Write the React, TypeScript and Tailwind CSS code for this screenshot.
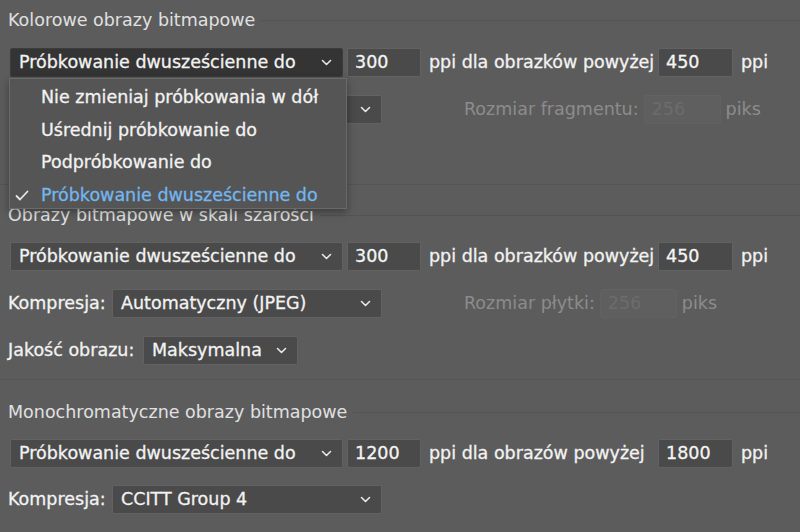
import React from 'react';

const font = { fontFamily: '"DejaVu Sans", "Liberation Sans", sans-serif' };

function Chevron({ className = '' }: { className?: string }) {
  return (
    <svg className={className} width="11" height="7" viewBox="0 0 11 7" fill="none">
      <path d="M1.5 1.5l4 4 4-4" stroke="#e8e8e8" strokeWidth="1.6" strokeLinecap="round" strokeLinejoin="round" />
    </svg>
  );
}

function Select({ value, width, active = false }: { value: string; width: string; active?: boolean }) {
  return (
    <div
      className={`${width} h-[29px] flex items-center justify-between pl-[8px] pr-[10px] rounded-[2px] border ${
        active ? 'bg-[#343434] border-[#3c3c3c]' : 'bg-[#4a4a4a] border-[#626262]'
      }`}
    >
      <span className="text-[#f2f2f2] whitespace-nowrap [-webkit-text-stroke:0.3px_#f2f2f2]">{value}</span>
      <Chevron />
    </div>
  );
}

function NumInput({ value, width = 'w-[74px]', disabled = false }: { value: string; width?: string; disabled?: boolean }) {
  return (
    <div
      className={`${width} h-[29px] flex items-center px-[7px] rounded-[2px] border ${
        disabled
          ? 'bg-[#5f5f5f] border-[#626262] text-[#6c6c6c]'
          : 'bg-[#4a4a4a] border-[#626262] text-[#f4f4f4] [-webkit-text-stroke:0.3px_#f4f4f4]'
      }`}
    >
      {value}
    </div>
  );
}

function Header({ title }: { title: string }) {
  return (
    <div className="flex items-center gap-[6px] pl-[8px] h-[24px]">
      <span className="text-[#e0e0e0] whitespace-nowrap">{title}</span>
      <div className="flex-1 h-px bg-[#535353]"></div>
    </div>
  );
}

function Label({ children, className = '' }: { children: React.ReactNode; className?: string }) {
  return <span className={`text-[#f2f2f2] whitespace-nowrap [-webkit-text-stroke:0.3px_#f2f2f2] ${className}`}>{children}</span>;
}

function ResampleRow({ first, second, label, active = false }: { first: string; second: string; label: string; active?: boolean }) {
  return (
    <div className="flex items-center pl-[10px] h-[29px]">
      <Select value="Próbkowanie dwusześcienne do" width="w-[333px]" active={active} />
      <div className="ml-[4px]">
        <NumInput value={first} />
      </div>
      <Label className="ml-[8px] w-[229px]">{label}</Label>
      <NumInput value={second} width="w-[75px]" />
      <Label className="ml-[8px]">ppi</Label>
    </div>
  );
}

function TileRow({ label, value, tileLabel, tileGap }: { label: string; value: string; tileLabel: string; tileGap: string }) {
  return (
    <div className="flex items-center h-[29px]">
      <Label className="pl-[8px] w-[112px]">{label}</Label>
      <Select value={value} width="w-[270px]" />
      <span className="ml-[82px] text-[#8c8c8c] whitespace-nowrap">{tileLabel}</span>
      <div className={tileGap}>
        <NumInput value="256" width="w-[77px]" disabled />
      </div>
      <span className="ml-[5px] text-[#8c8c8c]">piks</span>
    </div>
  );
}

export default function App() {
  return (
    <div className="relative w-[800px] h-[532px] overflow-hidden bg-[#5c5c5c] text-[17.5px]" style={font}>
      {/* Kolorowe obrazy bitmapowe */}
      <div className="pt-[8px]">
        <Header title="Kolorowe obrazy bitmapowe" />
        <div className="mt-[16px]">
          <ResampleRow first="300" second="450" label="ppi dla obrazków powyżej" active />
        </div>
        {/* row mostly covered by the open menu */}
        <div className="mt-[18px] flex items-center h-[29px]">
          <span className="w-[112px]"></span>
          <div className="w-[270px] h-[29px] flex items-center justify-end pr-[10px] rounded-[2px] border bg-[#4a4a4a] border-[#626262]">
            <Chevron />
          </div>
          <span className="ml-[82px] text-[#8c8c8c] whitespace-nowrap">Rozmiar fragmentu:</span>
          <div className="ml-[5px]">
            <NumInput value="256" width="w-[77px]" disabled />
          </div>
          <span className="ml-[5px] text-[#8c8c8c]">piks</span>
        </div>
        <div className="mt-[18px] h-[29px]"></div>
      </div>

      <div className="mt-[13px] h-px bg-[#545454]"></div>

      {/* Obrazy bitmapowe w skali szarości */}
      <div className="pt-[18px]">
        <Header title="Obrazy bitmapowe w skali szarości" />
        <div className="mt-[15px]">
          <ResampleRow first="300" second="450" label="ppi dla obrazków powyżej" />
        </div>
        <div className="mt-[18px]">
          <TileRow label="Kompresja:" value="Automatyczny (JPEG)" tileLabel="Rozmiar płytki:" tileGap="ml-[5px]" />
        </div>
        <div className="mt-[18px] flex items-center h-[29px]">
          <Label className="pl-[8px] w-[143px]">Jakość obrazu:</Label>
          <Select value="Maksymalna" width="w-[155px]" />
        </div>
      </div>

      <div className="mt-[14px] h-px bg-[#545454]"></div>

      {/* Monochromatyczne obrazy bitmapowe */}
      <div className="pt-[20px]">
        <Header title="Monochromatyczne obrazy bitmapowe" />
        <div className="mt-[15px]">
          <ResampleRow first="1200" second="1800" label="ppi dla obrazów powyżej" />
        </div>
        <div className="mt-[17px] flex items-center h-[29px]">
          <Label className="pl-[8px] w-[112px]">Kompresja:</Label>
          <Select value="CCITT Group 4" width="w-[270px]" />
        </div>
      </div>

      {/* Open resampling menu */}
      <div className="absolute left-[9px] top-[78px] w-[338px] h-[131px] bg-[#555555] border border-[#6a6a6a] shadow-[0_3px_8px_rgba(0,0,0,0.35)] py-[2px]">
        {[
          'Nie zmieniaj próbkowania w dół',
          'Uśrednij próbkowanie do',
          'Podpróbkowanie do',
          'Próbkowanie dwusześcienne do',
        ].map((item, i) => (
          <div key={item} className="relative h-[32.5px] flex items-center pl-[31px]">
            {i === 3 && (
              <svg className="absolute left-[5px] top-[11px]" width="14" height="11" viewBox="0 0 14 11" fill="none">
                <path d="M1.5 6l3.5 3.5L12.5 1.5" stroke="#e6e6e6" strokeWidth="1.8" strokeLinecap="round" strokeLinejoin="round" />
              </svg>
            )}
            {i === 3 ? (
              <span className="text-[#74b6ee] whitespace-nowrap [-webkit-text-stroke:0.3px_#74b6ee]">{item}</span>
            ) : (
              <Label>{item}</Label>
            )}
          </div>
        ))}
      </div>
    </div>
  );
}
